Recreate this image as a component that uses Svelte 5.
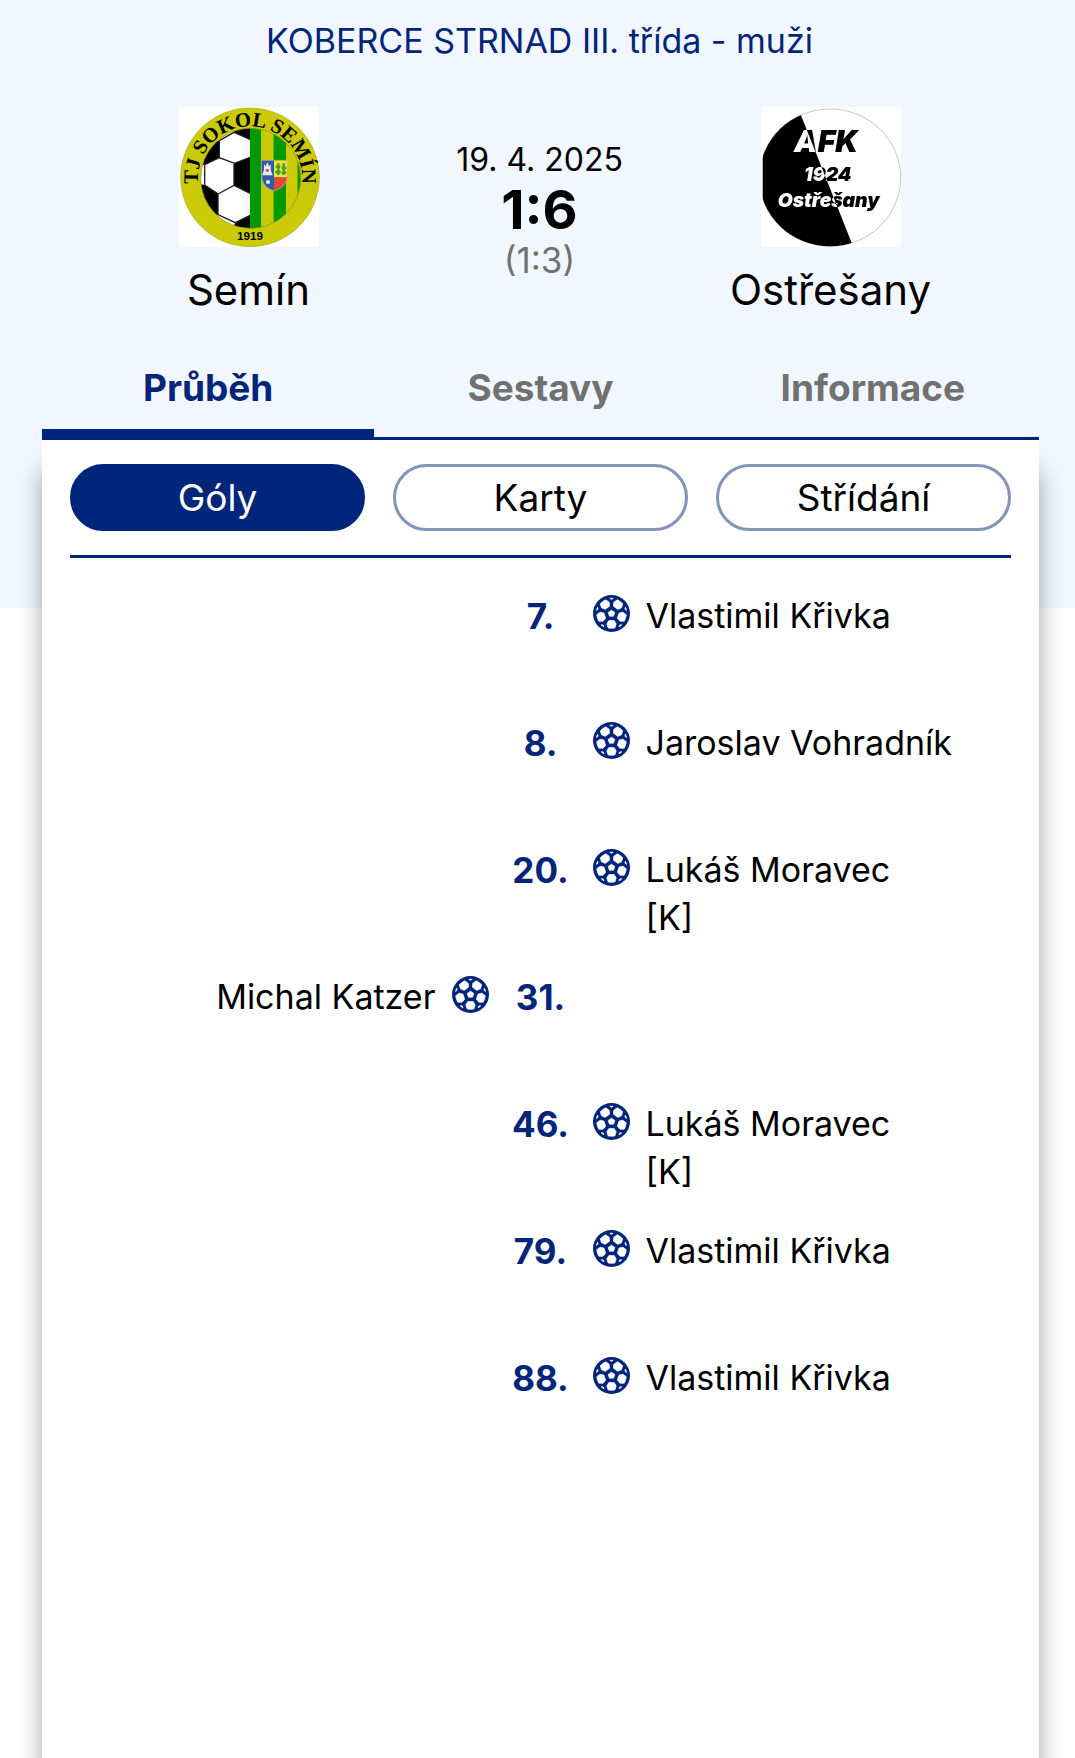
<script lang="ts">
    type Goal = { minute: number; player: string; note?: string; home?: boolean };

    const tabs = ['Průběh', 'Sestavy', 'Informace'];
    const filters = ['Góly', 'Karty', 'Střídání'];

    const goals: Goal[] = [
        { minute: 7, player: 'Vlastimil Křivka' },
        { minute: 8, player: 'Jaroslav Vohradník' },
        { minute: 20, player: 'Lukáš Moravec', note: '[K]' },
        { minute: 31, player: 'Michal Katzer', home: true },
        { minute: 46, player: 'Lukáš Moravec', note: '[K]' },
        { minute: 79, player: 'Vlastimil Křivka' },
        { minute: 88, player: 'Vlastimil Křivka' },
    ];

    let activeTab = $state('Průběh');
    let activeFilter = $state('Góly');
</script>

{#snippet ball()}
    <svg class="ball" viewBox="-55 -55 110 110" aria-hidden="true">
        <circle r="55" fill="#00257b" />
        <g fill="#fff" stroke="#fff" stroke-width="2" stroke-linejoin="round">
            <path d="M0-10 10-3 6 8H-6L-10-3Z" />
            {#each [0, 72, 144, 216, 288] as angle}
                <g transform="rotate({angle})">
                    <path d="M-8 21H8L14 31 10 43Q0 45-10 43L-14 31Z" />
                    <path d="M-5-45Q0-46 5-45L0-42Z" />
                </g>
            {/each}
        </g>
    </svg>
{/snippet}

{#snippet scorer(goal: Goal)}
    <span class="player">
        {goal.player}
        {#if goal.note}<span class="note">{goal.note}</span>{/if}
    </span>
{/snippet}

<div class="page">
    <header>
        <h1>KOBERCE STRNAD III. třída - muži</h1>
        <div class="match">
            <div class="team">
                <svg class="logo" viewBox="27 21 420 420" role="img" aria-label="TJ Sokol Semín">
                    <defs>
                        <clipPath id="semin-inner"><circle cx="242" cy="235" r="150" /></clipPath>
                        <path id="semin-arc" d="M86 260A156 156 0 1 1 394 260" />
                    </defs>
                    <rect x="27" y="21" width="420" height="420" fill="#fff" />
                    <circle cx="240" cy="232" r="208" fill="#cbca06" stroke="#a9aa35" stroke-width="2" />
                    <g clip-path="url(#semin-inner)">
                        <path fill="#fff" d="M80 80H240V400H80Z" />
                        <path d="M192 70H240V120L192 97ZM80 195V120L148 122V173L104 194ZM192 190 240 172V280L192 256ZM80 250 104 255 144 280V344L100 350ZM196 368 240 346V400H180Z" />
                        <path
                            fill="none"
                            stroke="#222"
                            stroke-width="4"
                            d="M148 122 192 97 240 118M148 122V173L194 190 240 172M148 173 104 194V255L144 282 192 256V190M192 256 240 280M144 282V344L196 368 240 346"
                        />
                        <path fill="#009a00" d="M240 80h34v310h-34zM310 80h38v310h-38zM382 80h20v310h-20z" />
                        <path fill="#cbca06" d="M274 80h36v310h-36zM348 80h34v310h-34z" />
                    </g>
                    <circle cx="242" cy="235" r="150" fill="none" stroke="#8d8f20" stroke-width="2" />
                    <path fill="#315cae" d="M274 181H312V272Q274 264 274 220Z" />
                    <path fill="#e9e52c" d="M312 181H352V232H312Z" />
                    <path fill="#e04c32" d="M312 232H352Q350 264 312 272Z" />
                    <path fill="none" stroke="#d0a5a0" stroke-width="2" d="M274 181H352V220Q352 264 312 272Q274 264 274 220Z" />
                    <path fill="#e8edf8" d="M282 193 287 199 292 187 297 199 302 193V210L308 226H276L282 210Z" />
                    <circle cx="292" cy="211" r="5" fill="#e04c32" />
                    <circle cx="294" cy="246" r="6" fill="#e8edf8" />
                    <path fill="none" stroke="#459c2c" stroke-width="7" d="M325 225V190M317 200H331M316 216H332M341 225V190M335 204H349M335 218H349" />
                    <text class="arc" text-anchor="middle"><textPath href="#semin-arc" startOffset="50%">TJ SOKOL SEMÍN</textPath></text>
                    <text class="year" x="240" y="421" text-anchor="middle">1919</text>
                </svg>
                <span class="team-name">Semín</span>
            </div>
            <div class="result">
                <span class="date">19. 4. 2025</span>
                <strong class="score">1:6</strong>
                <span class="half-time">(1:3)</span>
            </div>
            <div class="team">
                <svg class="logo" viewBox="33 21 420 420" role="img" aria-label="AFK 1924 Ostřešany">
                    <defs>
                        <clipPath id="afk-half"><path d="M37 21H143L310 441H37Z" /></clipPath>
                        <clipPath id="afk-frame"><path d="M37 21H453V441H37Z" /></clipPath>
                    </defs>
                    <rect x="33" y="21" width="420" height="420" fill="#fff" />
                    <g clip-path="url(#afk-frame)">
                        <ellipse cx="240" cy="233" rx="212" ry="206" fill="#fff" stroke="#aaa" stroke-width="2" />
                        <ellipse cx="240" cy="233" rx="212" ry="206" clip-path="url(#afk-half)" />
                    </g>
                    <g class="afk" text-anchor="middle">
                        <text x="228" y="156" font-size="90">AFK</text>
                        <text x="233" y="244" font-size="58">1924</text>
                        <text x="236" y="321" font-size="58">Ostřešany</text>
                    </g>
                </svg>
                <span class="team-name">Ostřešany</span>
            </div>
        </div>
    </header>

    <main>
        <nav class="tabs">
            {#each tabs as tab}
                <button type="button" class="tab" class:active={tab === activeTab} onclick={() => (activeTab = tab)}>
                    {tab}
                </button>
            {/each}
        </nav>
        <section class="card">
            <div class="filters">
                {#each filters as filter}
                    <button
                        type="button"
                        class="pill"
                        class:active={filter === activeFilter}
                        onclick={() => (activeFilter = filter)}
                    >
                        {filter}
                    </button>
                {/each}
            </div>
            <ul class="goals">
                {#each goals as goal}
                    <li>
                        <div class="side home">
                            {#if goal.home}{@render scorer(goal)}{@render ball()}{/if}
                        </div>
                        <span class="minute">{goal.minute}.</span>
                        <div class="side">
                            {#if !goal.home}{@render ball()}{@render scorer(goal)}{/if}
                        </div>
                    </li>
                {/each}
            </ul>
        </section>
    </main>
</div>

<style>
    :global(body) {
        margin: 0;
    }

    .page {
        display: flex;
        flex-direction: column;
        min-height: 100vh;
        box-sizing: border-box;
        overflow: hidden;
        font-family: Inter, "Liberation Sans", sans-serif;
        font-size: 34px;
        line-height: 48px;
        color: #000;
        background: linear-gradient(#f2f7ff 608px, #fff 608px);
    }

    header {
        padding: 17px 99px 32px 103px;
    }

    h1 {
        margin: 0 0 42px;
        font-size: 34px;
        font-weight: 400;
        text-align: center;
        color: #00257b;
    }

    .match {
        display: grid;
        grid-template-columns: repeat(3, 1fr);
    }

    .team,
    .result {
        display: flex;
        flex-direction: column;
        align-items: center;
    }

    .logo {
        width: 140px;
        height: 140px;
        margin-bottom: 19px;
        overflow: visible;
        isolation: isolate;
    }

    .arc {
        font: bold 62px "Liberation Serif", serif;
    }

    .year {
        font: bold 35px "Liberation Sans", sans-serif;
    }

    /* letters flip colour where they cross the black half */
    .afk {
        font-family: Inter, sans-serif;
        font-weight: 900;
        font-style: italic;
        fill: #fff;
        mix-blend-mode: difference;
    }

    .team-name {
        font-size: 42px;
    }

    .result {
        padding-top: 29px;
    }

    .date {
        font-size: 32px;
    }

    .score {
        font-size: 54px;
        font-weight: 700;
        line-height: 52px;
    }

    .half-time {
        font-size: 35px;
        color: #717171;
    }

    main {
        flex: 1;
        display: flex;
        flex-direction: column;
        margin: 0 36px 0 42px;
    }

    button {
        padding: 0;
        font: inherit;
        font-size: 37px;
        cursor: pointer;
    }

    .tabs {
        display: grid;
        grid-template-columns: repeat(3, 1fr);
        border-bottom: 3px solid #00257b;
    }

    .tab {
        height: 91px;
        border: none;
        border-bottom: 8px solid transparent;
        background: none;
        font-weight: 700;
        color: #717171;
    }

    .tab.active {
        color: #00257b;
        border-color: #00257b;
    }

    .card {
        flex: 1;
        padding: 24px 28px 0;
        background: #fff;
        box-shadow: 0 32px 22px rgba(0, 0, 0, 0.36);
    }

    .filters {
        display: grid;
        grid-template-columns: repeat(3, 1fr);
        gap: 28px;
        padding-bottom: 24px;
        border-bottom: 3px solid #00257b;
    }

    .pill {
        height: 67px;
        border: 3px solid #8495bb;
        border-radius: 34px;
        background: #fff;
        color: #000;
    }

    .pill.active {
        border-color: #00257b;
        background: #00257b;
        color: #fff;
    }

    .goals {
        list-style: none;
        margin: 0;
        padding: 34px 0 0;
    }

    .goals li {
        display: grid;
        grid-template-columns: 1fr 104px 1fr;
        min-height: 127px;
    }

    .side {
        display: flex;
        align-items: flex-start;
        gap: 16px;
    }

    .home {
        justify-content: flex-end;
    }

    .ball {
        flex: none;
        width: 37px;
        height: 37px;
        margin-top: 3px;
    }

    .note {
        display: block;
    }

    .minute {
        font-size: 35px;
        font-weight: 700;
        text-align: center;
        color: #00257b;
    }
</style>
